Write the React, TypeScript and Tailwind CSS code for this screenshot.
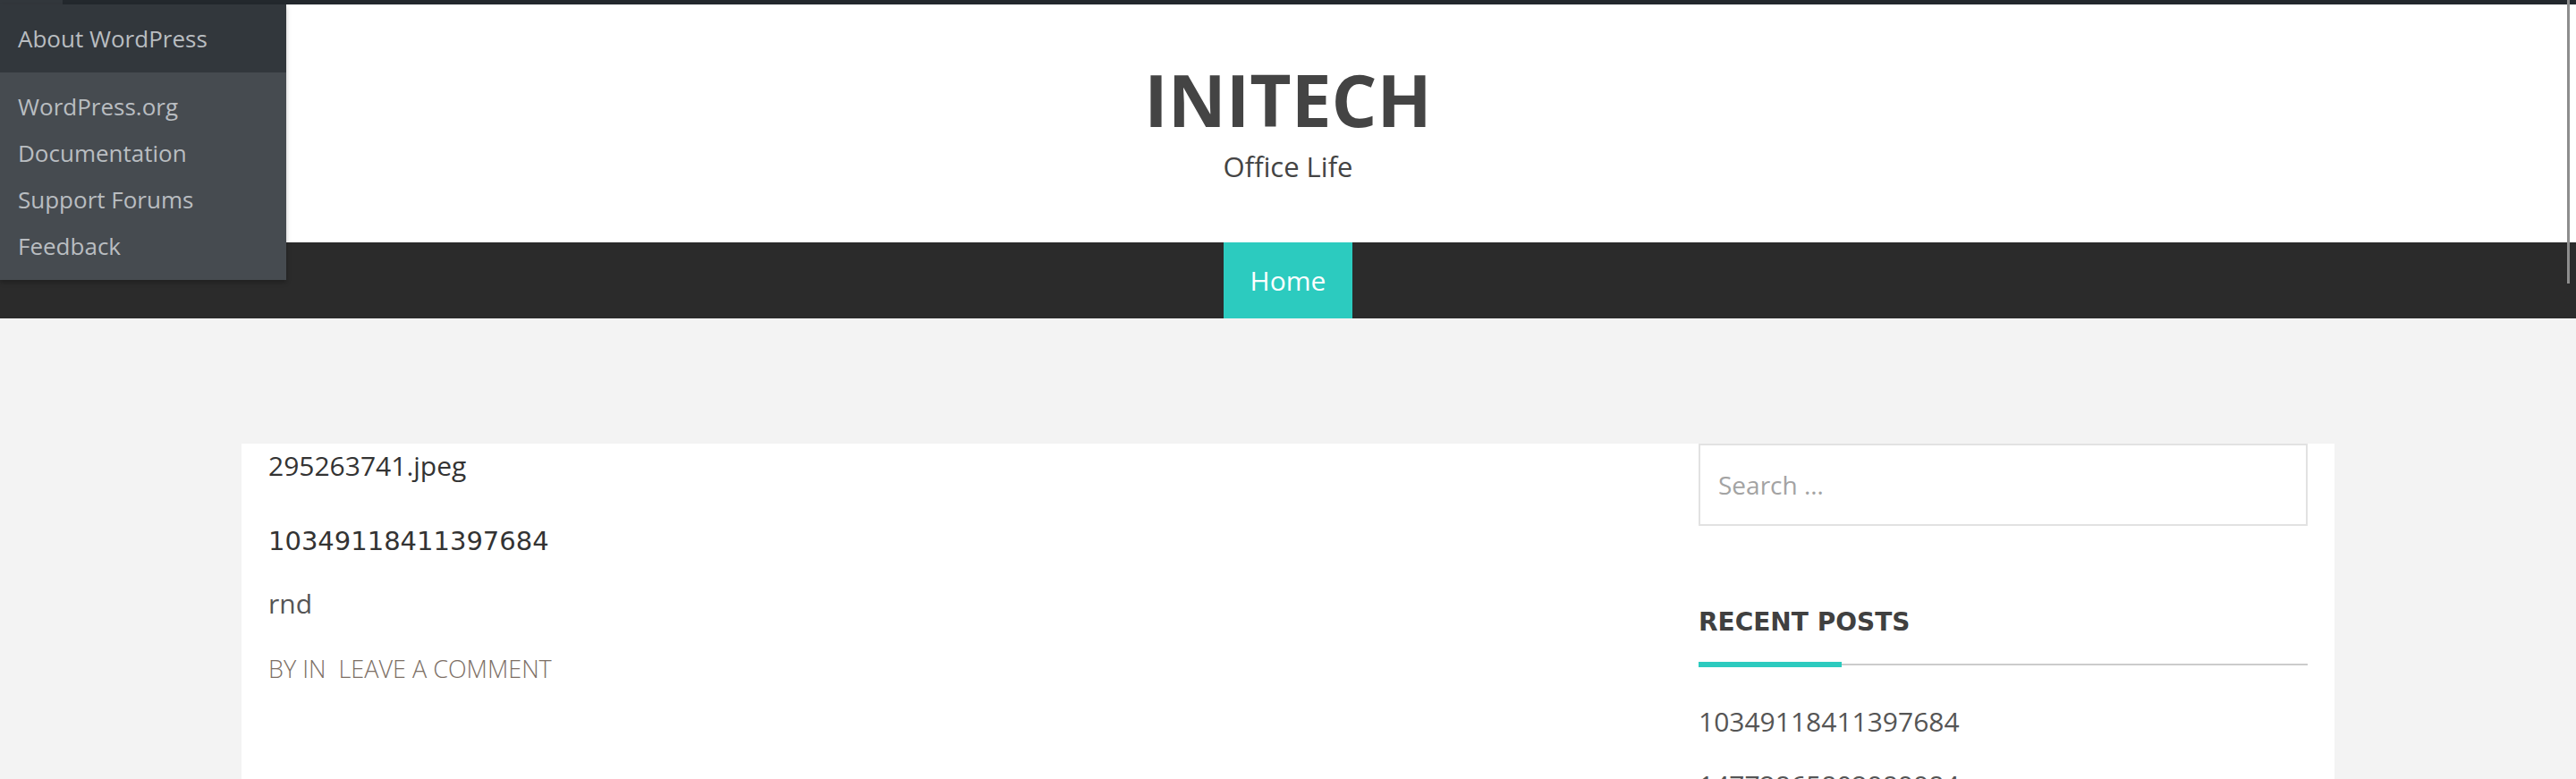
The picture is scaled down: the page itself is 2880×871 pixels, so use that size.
import React from "react";

export default function App() {
  return (
    <div className="relative h-[871px] overflow-hidden bg-[#f3f3f3] font-['Open_Sans',sans-serif]">
      {/* admin bar strip */}
      <div className="h-[5px] bg-[#23282d]" />

      {/* header */}
      <header className="flex flex-col items-center bg-white pt-[66px] pb-[70px]">
        <h1 className="text-[80px] leading-[80px] font-bold text-[#444444]">INITECH</h1>
        <p className="mt-[20px] text-[31px] leading-[30px] text-[#444444]">Office Life</p>
      </header>

      {/* nav */}
      <nav className="flex h-[85px] justify-center bg-[#2b2b2b]">
        <a className="block w-[144px] bg-[#2ccbbf] text-center text-[30px] leading-[85px] text-white">Home</a>
      </nav>

      {/* main */}
      <main className="pt-[140px]">
        <div className="mx-auto flex h-[600px] w-[2340px] justify-between bg-white px-[30px]">
          <article className="flex flex-col">
            <p className="text-[30px] leading-[50px] text-[#333333]">295263741.jpeg</p>
            <h2 className="mt-[39px] font-['DejaVu_Sans',sans-serif] text-[29px] leading-[40px] font-normal text-[#333333]">
              10349118411397684
            </h2>
            <p className="mt-[27px] text-[30px] leading-[45px] text-[#555555]">rnd</p>
            <p className="mt-[31px] text-[27px] leading-[40px] font-light uppercase text-[#7d7066]">
              <span>By</span> <span>in</span>&nbsp;&nbsp;<span>Leave a comment</span>
            </p>
          </article>

          <aside className="flex w-[681px] flex-col">
            <input
              type="search"
              placeholder="Search …"
              className="h-[92px] w-full border-2 border-[#e2e2e2] bg-white pl-[20px] text-[28px] text-[#555555] outline-none placeholder:text-[#a3a3a3]"
            />
            <h3 className="mt-[90px] font-['DejaVu_Sans',sans-serif] text-[28px] leading-[36px] font-bold uppercase text-[#404040]">
              Recent Posts
            </h3>
            <div className="relative mt-[26px] h-[6px]">
              <div className="absolute left-0 right-0 top-[2px] h-[2px] bg-[#cccccc]" />
              <div className="absolute left-0 top-0 h-[6px] w-[160px] bg-[#2ccbbf]" />
            </div>
            <ul className="mt-[38px] flex flex-col gap-[26px] text-[30px] leading-[45px] text-[#555555]">
              <li>10349118411397684</li>
              <li>14772865802989984</li>
            </ul>
          </aside>
        </div>
      </main>

      {/* admin dropdown overlay */}
      <div className="absolute left-0 top-0 h-[5px] w-[70px] bg-[#32373c]" />
      <div className="absolute left-0 top-[5px] w-[320px] shadow-[0_3px_5px_rgba(0,0,0,0.25)] text-[26px] leading-[52px] text-[#b9bdc1]">
        <div className="bg-[#32373c] px-[20px] pt-[12px] pb-[12px]">About WordPress</div>
        <ul className="bg-[#464b50] px-[20px] pt-[12px] pb-[12px]">
          <li>WordPress.org</li>
          <li>Documentation</li>
          <li>Support Forums</li>
          <li>Feedback</li>
        </ul>
      </div>

      {/* overlay scrollbar thumb */}
      <div className="absolute right-[7px] top-0 h-[317px] w-[3px] bg-[#8e8e8e]" />
    </div>
  );
}
